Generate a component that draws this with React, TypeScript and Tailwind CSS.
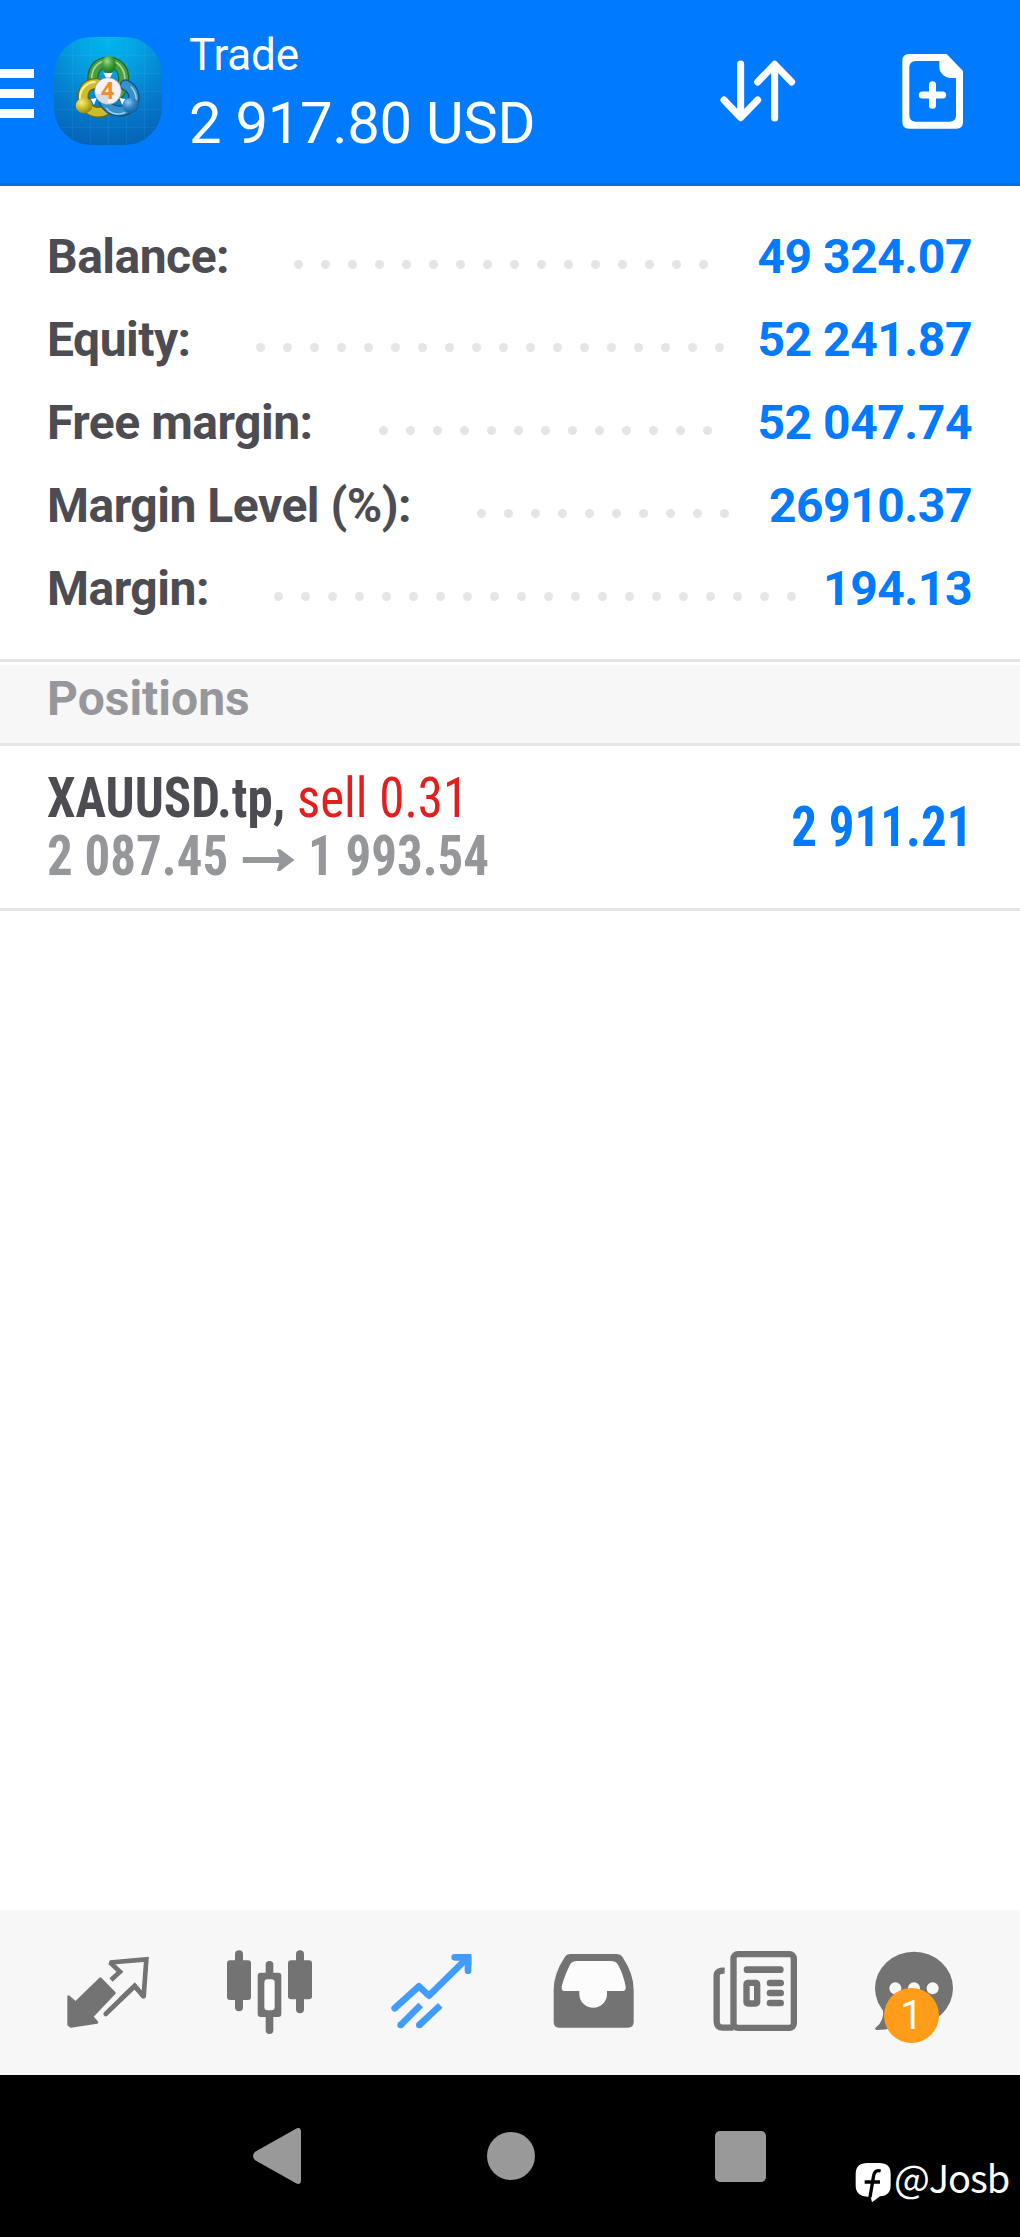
import React from 'react';

interface AccountRow {
  label: string;
  value: string;
  labelWidth: string;
  dots: number;
}

const accountRows: AccountRow[] = [
  { label: 'Balance:', value: '49 324.07', labelWidth: 'w-[247px]', dots: 16 },
  { label: 'Equity:', value: '52 241.87', labelWidth: 'w-[209px]', dots: 18 },
  { label: 'Free margin:', value: '52 047.74', labelWidth: 'w-[332px]', dots: 13 },
  { label: 'Margin Level (%):', value: '26910.37', labelWidth: 'w-[430px]', dots: 10 },
  { label: 'Margin:', value: '194.13', labelWidth: 'w-[227px]', dots: 20 }
];

const AppLogo = () => (
  <svg className="w-[108px] h-[108px]" viewBox="42 36 324 324">
    <defs>
      <radialGradient id="logoBg" cx="0.5" cy="0.02" r="1">
        <stop offset="0" stopColor="#02b6ee" />
        <stop offset="0.3" stopColor="#04a1e2" />
        <stop offset="0.7" stopColor="#0578c9" />
        <stop offset="1" stopColor="#0563b7" />
      </radialGradient>
      <radialGradient id="greenHead" cx="0.4" cy="0.3" r="0.7">
        <stop offset="0" stopColor="#a5d98e" />
        <stop offset="0.5" stopColor="#45a13c" />
        <stop offset="1" stopColor="#1c7424" />
      </radialGradient>
      <radialGradient id="yellowHead" cx="0.35" cy="0.3" r="0.75">
        <stop offset="0" stopColor="#f6f08c" />
        <stop offset="0.5" stopColor="#cdbd28" />
        <stop offset="1" stopColor="#8f8512" />
      </radialGradient>
      <radialGradient id="blueHead" cx="0.35" cy="0.3" r="0.75">
        <stop offset="0" stopColor="#8ccbee" />
        <stop offset="0.5" stopColor="#2f86c4" />
        <stop offset="1" stopColor="#125c98" />
      </radialGradient>
    </defs>
    <rect x="42" y="36" width="324" height="324" rx="112" fill="url(#logoBg)" />
    <path
      d="M97 56V340M151 38V358M205 36V360M259 38V358M313 56V340M62 91H346M44 145H364M42 199H366M44 253H364M62 307H346"
      stroke="#6cc6f5"
      strokeOpacity="0.2"
      strokeWidth="2"
    />
    <g fill="none" strokeLinecap="round">
      <path d="M162 180C150 138 172 112 205 112C240 112 260 142 247 186C243 200 236 208 226 214" stroke="#1d6a2b" strokeWidth="34" />
      <path d="M162 180C150 138 172 112 205 112C240 112 260 142 247 186C243 200 236 208 226 214" stroke="#4a9e42" strokeWidth="26" />
      <path d="M155 164C154 128 176 107 205 107C234 107 254 130 255 164" stroke="#a5d797" strokeWidth="5" />
      <path d="M172 176C134 174 120 208 136 240C150 264 180 266 196 256" stroke="#6f6810" strokeWidth="34" />
      <path d="M172 176C134 174 120 208 136 240C150 264 180 266 196 256" stroke="#cbbd2c" strokeWidth="26" />
      <path d="M164 171C135 173 118 198 120 222" stroke="#f7f2a0" strokeWidth="6" />
      <path d="M256 180C282 192 290 220 273 242C252 268 208 260 194 232" stroke="#12527f" strokeWidth="34" />
      <path d="M256 180C282 192 290 220 273 242C252 268 208 260 194 232" stroke="#3690cb" strokeWidth="26" />
      <path d="M274 186C288 202 292 222 286 234M200 250C214 268 236 271 254 263" stroke="#a0d4f2" strokeWidth="4" />
    </g>
    <path d="M190 143H218L208 162H200ZM152 222L170 219L162 240ZM238 219L256 222L247 240Z" fill="#fff" />
    <ellipse cx="206" cy="119" rx="22" ry="26" fill="url(#greenHead)" />
    <ellipse cx="132" cy="242" rx="25" ry="23" fill="url(#yellowHead)" />
    <ellipse cx="272" cy="241" rx="25" ry="23" fill="url(#blueHead)" />
    <circle cx="204" cy="198" r="40" fill="#f3f3f5" stroke="#8d8d95" strokeWidth="2" />
    <path d="M166 206A39 39 0 0 0 204 237V206Z" fill="#d9dadf" />
    <text
      x="203"
      y="223"
      textAnchor="middle"
      className="font-['Roboto',sans-serif] text-[72px] font-bold"
      fill="#f58a2c"
    >
      4
    </text>
  </svg>
);

const SortIcon = () => (
  <svg
    className="w-[82px] h-[68px]"
    viewBox="110 112 246 204"
    fill="none"
    stroke="#fff"
    strokeWidth="21"
    strokeLinecap="round"
    strokeLinejoin="round"
  >
    <path d="M181 133V293M131 241L181 294L232 241" />
    <path d="M283 295V135M232 187L283 134L334 187" />
  </svg>
);

const NewOrderIcon = () => (
  <svg className="w-[65px] h-[79px]" viewBox="660 96 195 237">
    <path
      fill="#fff"
      fillRule="evenodd"
      d="M687 102H800L849 153V306Q849 326 829 326H687Q667 326 667 306V122Q667 102 687 102ZM708 123Q688 123 688 143V285Q688 305 708 305H808Q828 305 828 285V174H810C792 172 778 158 778 142V123Z"
    />
    <path d="M727 225H788M757.5 194V256" stroke="#fff" strokeWidth="21" strokeLinecap="round" />
  </svg>
);

const QuotesIcon = () => (
  <svg className="w-full h-full" viewBox="-48 30 486 495">
    <path
      fill="#737373"
      stroke="#737373"
      strokeWidth="8"
      strokeLinejoin="round"
      d="M181 236L223 279L156 350L171 367L92 379L86 374V290L107 308Z"
    />
    <path d="M213 240L240 215L210 187.500L319 178L311 290L284 258L240 300" fill="none" stroke="#737373" strokeWidth="14" strokeMiterlimit="2" />
    <path d="M311 289L284 258L197 342" fill="none" stroke="#737373" strokeWidth="14" strokeLinecap="round" />
  </svg>
);

const ChartIcon = () => (
  <svg className="w-full h-full" viewBox="438 30 486 495" fill="#737373">
    <rect x="585" y="151" width="24" height="183" rx="12" />
    <rect x="561" y="181" width="72" height="119" rx="9" />
    <rect x="677" y="183" width="23" height="219" rx="11" />
    <rect x="653" y="218" width="71" height="133" rx="9" />
    <rect x="673" y="238" width="31" height="93" rx="10" fill="#fcfcfc" />
    <rect x="768" y="151" width="24" height="189" rx="12" />
    <rect x="744" y="181" width="72" height="117" rx="9" />
  </svg>
);

const TradeIcon = () => (
  <svg className="w-full h-full" viewBox="-36 30 486 495" fill="none" stroke="#419cff" strokeWidth="20">
    <path d="M104 325L177 259L207 287L317 179" strokeLinecap="round" strokeLinejoin="round" />
    <path d="M284 172H324V212" strokeLinecap="round" strokeLinejoin="round" />
    <path d="M300 172H324V196" />
    <path d="M182 315L122 375M241 316L178 375" />
    <g fill="#419cff" stroke="none">
      <circle cx="122" cy="375" r="10" />
      <circle cx="178" cy="375" r="10" />
    </g>
  </svg>
);

const HistoryIcon = () => (
  <svg className="w-full h-full" viewBox="450 30 486 495">
    <path
      fill="#737373"
      d="M632 162H769Q781 162 788 172Q821 222 821 270V366Q821 383 804 383H597Q581 383 581 366V270Q581 222 614 172Q620 162 632 162Z"
    />
    <path
      fill="#fcfcfc"
      d="M650 183H752Q768 183 774 194Q790 222 797 260Q798 273 788 273H741V282A41.500 41.500 0 0 1 658 282V273H613Q604 273 605 260Q612 230 630 194Q636 183 650 183Z"
    />
  </svg>
);

const NewsIcon = () => (
  <svg className="w-full h-full" viewBox="-24 30 486 495" fill="none" stroke="#737373" strokeWidth="19">
    <rect x="160.5" y="162.5" width="181" height="221" rx="13" />
    <path d="M134 212Q110 211 110 226V364Q110 383 128 383H160" />
    <path d="M201 209H301M270 249H302M270 279H302M270 309H302" strokeWidth="20" strokeLinecap="round" />
    <rect x="199.500" y="248.500" width="32" height="62" rx="4" />
  </svg>
);

const MessagesIcon = () => (
  <svg className="w-full h-full" viewBox="462 30 486 495" fill="#737373">
    <ellipse cx="702" cy="265" rx="117" ry="110" />
    <path d="M608 322Q616 362 586 384Q584 390 592 390Q640 390 672 366Z" />
    <g fill="#f7f7f7">
      <circle cx="646" cy="265" r="18" />
      <circle cx="702" cy="265" r="18" />
      <circle cx="758" cy="265" r="18" />
    </g>
  </svg>
);

const Header = () => (
  <header className="h-[186px] bg-[#007aff] border-b-3 border-[#006fe6] flex items-center">
    <div className="w-[34px] mt-1 flex flex-col gap-[11px]">
      <div className="h-[9px] bg-white" />
      <div className="h-[9px] bg-white" />
      <div className="h-[9px] bg-white" />
    </div>
    <div className="ml-5 -mt-px">
      <AppLogo />
    </div>
    <div className="ml-[27px] -mt-1.5 w-[528px] text-white">
      <h1 className="text-[44px] leading-[68px] tracking-[-0.2px]">Trade</h1>
      <p className="text-[58px] leading-[68px] tracking-[-0.3px]">2 917.80 USD</p>
    </div>
    <div className="-mt-px">
      <SortIcon />
    </div>
    <div className="ml-[101px]">
      <NewOrderIcon />
    </div>
  </header>
);

const Account = () => (
  <section className="pt-[29px] pb-[29px] border-b-3 border-[#e5e5e5]">
    {accountRows.map((row) => (
      <div key={row.label} className="h-[83px] px-[47px] flex items-center text-[48px] font-bold tracking-[-0.5px] whitespace-nowrap">
        <span className={`${row.labelWidth} shrink-0 text-[#4d4c52]`}>{row.label}</span>
        <div className="flex gap-[18px] pt-4">
          {Array.from({ length: row.dots }, (_, i) => (
            <span key={i} className="size-[9px] rounded-full bg-[#e5e5e5]" />
          ))}
        </div>
        <span className="ml-auto mr-px tracking-[-0.45px] text-[#007aff]">{row.value}</span>
      </div>
    ))}
  </section>
);

const Positions = () => (
  <section>
    <h2 className="mt-[3px] h-[81px] pl-[47px] pb-[11px] flex items-center bg-[#f7f7f7] border-b-3 border-[#e5e5e5] text-[48px] font-bold text-[#96979b]">
      Positions
    </h2>
    <div className="h-[165px] pl-[47px] pr-12 pb-px flex items-center justify-between border-b-3 border-[#e5e5e5] font-['Roboto_Condensed','Roboto',sans-serif] text-[55px] leading-[58px] font-bold whitespace-nowrap">
      <div>
        <div className="origin-left scale-x-[0.927] text-[#4d4c52]">
          XAUUSD.tp, <span className="font-normal text-[#e31e1e]">sell 0.31</span>
        </div>
        <div className="origin-left scale-x-[0.927] flex items-center text-[#96979b]">
          <span>2 087.45</span>
          <svg className="ml-4 mr-3.5 mt-2 w-14 h-6" viewBox="0 0 56 24">
            <path d="M0 9H39.500L37 1.500Q41 0.500 43 3L56 12L43 21Q41 24 37 22.500L39.500 15H0Z" fill="#96979b" />
          </svg>
          <span>1 993.54</span>
        </div>
      </div>
      <div className="origin-right scale-x-[0.927] text-[#007aff]">2 911.21</div>
    </div>
  </section>
);

const TabBar = () => (
  <nav className="h-[165px] px-6 bg-[#f7f7f7] grid grid-cols-6">
    <QuotesIcon />
    <ChartIcon />
    <TradeIcon />
    <HistoryIcon />
    <NewsIcon />
    <div className="relative">
      <MessagesIcon />
      <span className="absolute left-[50px] top-[78px] size-[55px] rounded-full bg-[#ff9d1a] text-white text-[40px] leading-[55px] text-center">
        1
      </span>
    </div>
  </nav>
);

const SystemBar = () => (
  <footer className="h-[162px] pl-[253px] bg-black flex items-center overflow-hidden">
    <svg className="w-12 h-[56px] shrink-0" viewBox="0 0 48 56">
      <path d="M4 26L45 3V53L4 30Q2 28 4 26Z" fill="#999" stroke="#999" strokeWidth="6" strokeLinejoin="round" />
    </svg>
    <div className="ml-[186px] size-12 shrink-0 rounded-full bg-[#999]" />
    <div className="ml-[180px] size-[51px] shrink-0 rounded-[5px] bg-[#999]" />
    <div className="ml-[89px] mt-[42px] flex items-center text-white">
      <svg className="mt-2.5 w-9 h-[41px]" viewBox="45 66 108 123">
        <path d="M82 69H118Q152 69 152 102V136Q152 168 120 169L96 187L92 170H82Q47 169 47 136V102Q47 69 82 69Z" fill="#fff" />
        <path d="M122 93C106 89 102 98 100 112L90 172M74 126H120" fill="none" stroke="#000" strokeWidth="10" />
      </svg>
      <span className="ml-[3px] font-['Noto_Sans_CJK_SC',sans-serif] text-[38px] leading-[56px] tracking-[-1.1px]">@Josb</span>
    </div>
  </footer>
);

export default function App() {
  return (
    <div className="w-[1020px] h-[2237px] flex flex-col bg-white font-['Roboto','Liberation_Sans',sans-serif]">
      <Header />
      <main className="flex-1">
        <Account />
        <Positions />
      </main>
      <TabBar />
      <SystemBar />
    </div>
  );
}
